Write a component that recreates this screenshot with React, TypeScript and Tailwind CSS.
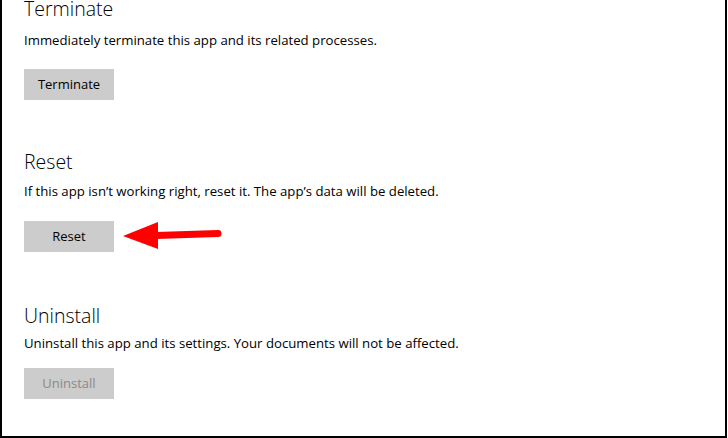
import React from "react";

const font = { fontFamily: '"Segoe UI", "Open Sans", "Noto Sans", sans-serif' };

function Section({
  title,
  text,
  button,
  disabled,
  extra,
  textGap,
  buttonGap,
}: {
  title: string;
  text: string;
  button: string;
  disabled?: boolean;
  extra?: React.ReactNode;
  textGap: string;
  buttonGap: string;
}) {
  return (
    <div className="flex flex-col">
      <h2 className="text-[19.5px] leading-[28px] font-light text-black">{title}</h2>
      <p className={textGap + " text-[13.2px] leading-[20px] text-black"}>{text}</p>
      <div className={buttonGap + " flex items-center gap-[10px]"}>
        <button
          className={
            "w-[90px] h-[31px] bg-[#cccccc] text-[13px] " +
            (disabled ? "text-[#8a8a8a]" : "text-black")
          }
        >
          {button}
        </button>
        {extra}
      </div>
    </div>
  );
}

function Arrow() {
  return (
    <svg width="100" height="30" viewBox="0 0 100 30" className="-ml-[1px]">
      <path d="M33 13.5 L95 11.5" stroke="#ff0000" strokeWidth="7" strokeLinecap="round" />
      <polygon points="0,14 35,0 35,27" fill="#ff0000" />
    </svg>
  );
}

export default function App() {
  return (
    <div
      style={font}
      className="w-[727px] h-[438px] overflow-hidden bg-white border-l-2 border-r-2 border-b-2 border-black"
    >
      <div className="pl-[22px] -mt-[5px] flex flex-col">
        <Section
          title="Terminate"
          text="Immediately terminate this app and its related processes."
          button="Terminate"
          textGap="mt-[7px]"
          buttonGap="mt-[19px]"
        />
        <div className="mt-[48px]">
          <Section
            title="Reset"
            text="If this app isn’t working right, reset it. The app’s data will be deleted."
            button="Reset"
            extra={<Arrow />}
            textGap="mt-[5px]"
            buttonGap="mt-[20px]"
          />
        </div>
        <div className="mt-[50px]">
          <Section
            title="Uninstall"
            text="Uninstall this app and its settings. Your documents will not be affected."
            button="Uninstall"
            disabled
            textGap="mt-[3px]"
            buttonGap="mt-[15px]"
          />
        </div>
      </div>
    </div>
  );
}
